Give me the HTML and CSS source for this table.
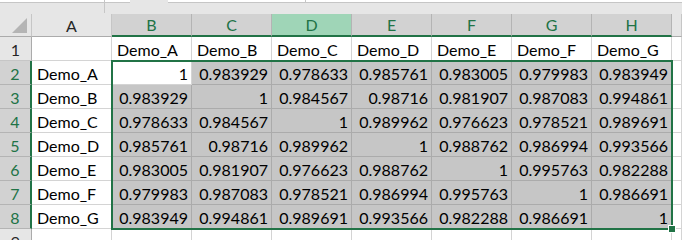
FILE: index.html
```html
<!DOCTYPE html>
<html>
<head>
<meta charset="utf-8">
<link rel="stylesheet" href="styles.css">
</head>
<body>
<div class="sheet">
  <div class="topbar">
    <div class="namebox"><span class="nb-sep"></span></div>
    <div class="fx-gap"></div>
    <div class="formula"><span class="fx-sep"></span></div>
  </div>

  <div class="corner"><span class="tri"></span></div>
  <div class="ch">A</div>
  <div class="ch sel">B</div>
  <div class="ch sel">C</div>
  <div class="ch sel hot">D</div>
  <div class="ch sel">E</div>
  <div class="ch sel">F</div>
  <div class="ch sel">G</div>
  <div class="ch sel">H</div>
  <div class="ch"></div>

  <div class="rh">1</div>
  <div class="c"></div>
  <div class="c">Demo_A</div>
  <div class="c">Demo_B</div>
  <div class="c">Demo_C</div>
  <div class="c">Demo_D</div>
  <div class="c">Demo_E</div>
  <div class="c">Demo_F</div>
  <div class="c">Demo_G</div>
  <div class="c"></div>

  <div class="rh sel">2</div>
  <div class="c">Demo_A</div>
  <div class="c n">1</div>
  <div class="c n s">0.983929</div>
  <div class="c n s">0.978633</div>
  <div class="c n s">0.985761</div>
  <div class="c n s">0.983005</div>
  <div class="c n s">0.979983</div>
  <div class="c n s">0.983949</div>
  <div class="c"></div>

  <div class="rh sel">3</div>
  <div class="c">Demo_B</div>
  <div class="c n s">0.983929</div>
  <div class="c n s">1</div>
  <div class="c n s">0.984567</div>
  <div class="c n s">0.98716</div>
  <div class="c n s">0.981907</div>
  <div class="c n s">0.987083</div>
  <div class="c n s">0.994861</div>
  <div class="c"></div>

  <div class="rh sel">4</div>
  <div class="c">Demo_C</div>
  <div class="c n s">0.978633</div>
  <div class="c n s">0.984567</div>
  <div class="c n s">1</div>
  <div class="c n s">0.989962</div>
  <div class="c n s">0.976623</div>
  <div class="c n s">0.978521</div>
  <div class="c n s">0.989691</div>
  <div class="c"></div>

  <div class="rh sel">5</div>
  <div class="c">Demo_D</div>
  <div class="c n s">0.985761</div>
  <div class="c n s">0.98716</div>
  <div class="c n s">0.989962</div>
  <div class="c n s">1</div>
  <div class="c n s">0.988762</div>
  <div class="c n s">0.986994</div>
  <div class="c n s">0.993566</div>
  <div class="c"></div>

  <div class="rh sel">6</div>
  <div class="c">Demo_E</div>
  <div class="c n s">0.983005</div>
  <div class="c n s">0.981907</div>
  <div class="c n s">0.976623</div>
  <div class="c n s">0.988762</div>
  <div class="c n s">1</div>
  <div class="c n s">0.995763</div>
  <div class="c n s">0.982288</div>
  <div class="c"></div>

  <div class="rh sel">7</div>
  <div class="c">Demo_F</div>
  <div class="c n s">0.979983</div>
  <div class="c n s">0.987083</div>
  <div class="c n s">0.978521</div>
  <div class="c n s">0.986994</div>
  <div class="c n s">0.995763</div>
  <div class="c n s">1</div>
  <div class="c n s">0.986691</div>
  <div class="c"></div>

  <div class="rh sel">8</div>
  <div class="c">Demo_G</div>
  <div class="c n s">0.983949</div>
  <div class="c n s">0.994861</div>
  <div class="c n s">0.989691</div>
  <div class="c n s">0.993566</div>
  <div class="c n s">0.982288</div>
  <div class="c n s">0.986691</div>
  <div class="c n s">1</div>
  <div class="c"></div>

  <div class="rh">9</div>
  <div class="c"></div>
  <div class="c"></div>
  <div class="c"></div>
  <div class="c"></div>
  <div class="c"></div>
  <div class="c"></div>
  <div class="c"></div>
  <div class="c"></div>
  <div class="c"></div>

  <div class="selbox"><span class="handle"></span></div>
</div>
</body>
</html>
```
FILE: styles.css
```css
html, body {
  margin: 0;
  padding: 0;
  background: #ffffff;
}
body {
  width: 682px;
  height: 240px;
  overflow: hidden;
  font-family: "Lato", "Liberation Sans", sans-serif;
  font-size: 16px;
  color: #000;
}
.sheet {
  position: relative;
  display: grid;
  grid-template-columns: 32px repeat(8, 80px) 1fr;
  grid-template-rows: 14px 23px repeat(9, 24px);
  width: 682px;
}
.topbar {
  grid-column: 1 / -1;
  display: flex;
  align-items: flex-start;
  background: #e6e6e6;
}
.namebox {
  width: 130px;
  height: 2px;
  background: #fff;
  border-bottom: 1px solid #c6c6c6;
  position: relative;
}
.nb-sep {
  position: absolute;
  left: 104px;
  top: 0;
  width: 1px;
  height: 13px;
  background: #c6c6c6;
}
.fx-gap {
  width: 38px;
  height: 3px;
}
.formula {
  flex: 1;
  height: 2px;
  background: #fff;
  border-bottom: 1px solid #c6c6c6;
  position: relative;
}
.fx-sep {
  position: absolute;
  left: 137px;
  top: 0;
  width: 1px;
  height: 3px;
  background: #c6c6c6;
}
.corner {
  box-sizing: border-box;
  background: #e6e6e6;
  border-right: 1px solid #c6c6c6;
  border-bottom: 1px solid #ababab;
  display: flex;
  justify-content: flex-end;
  align-items: flex-end;
  padding: 0 4px 3px 0;
}
.tri {
  width: 15px;
  height: 15px;
  background: #b4b4b4;
  clip-path: polygon(100% 0, 100% 100%, 0 100%);
}
.ch {
  box-sizing: border-box;
  background: #e6e6e6;
  border-right: 1px solid #c6c6c6;
  border-bottom: 1px solid #ababab;
  color: #262626;
  display: flex;
  align-items: center;
  justify-content: center;
}
.ch.sel {
  background: #d2d2d2;
  color: #217346;
  border-bottom: 2px solid #217346;
  border-right-color: #b4b4b4;
}
.ch.hot {
  background: #9fd5b7;
}
.rh {
  box-sizing: border-box;
  background: #e6e6e6;
  border-right: 1px solid #ababab;
  border-bottom: 1px solid #c6c6c6;
  color: #262626;
  display: flex;
  align-items: flex-end;
  justify-content: center;
  line-height: 18px;
  padding-bottom: 1px;
}
.rh.sel {
  background: #d2d2d2;
  color: #217346;
  border-right: 2px solid #217346;
  border-bottom-color: #b4b4b4;
}
.c {
  box-sizing: border-box;
  border-right: 1px solid #d4d4d4;
  border-bottom: 1px solid #d4d4d4;
  display: flex;
  align-items: flex-end;
  line-height: 18px;
  padding: 0 3px 1px 5px;
  white-space: nowrap;
  overflow: hidden;
}
.c.n {
  justify-content: flex-end;
}
.c.s {
  background: #c6c6c6;
  border-right-color: #ababab;
  border-bottom-color: #ababab;
}
.selbox {
  position: absolute;
  grid-column: 3 / 10;
  grid-row: 4 / 11;
  top: -1px;
  left: -1px;
  right: -1px;
  bottom: -1px;
  border: 2px solid #217346;
  pointer-events: none;
}
.handle {
  position: absolute;
  right: -5px;
  bottom: -5px;
  width: 6px;
  height: 6px;
  background: #217346;
  border: 1px solid #fff;
}
```
